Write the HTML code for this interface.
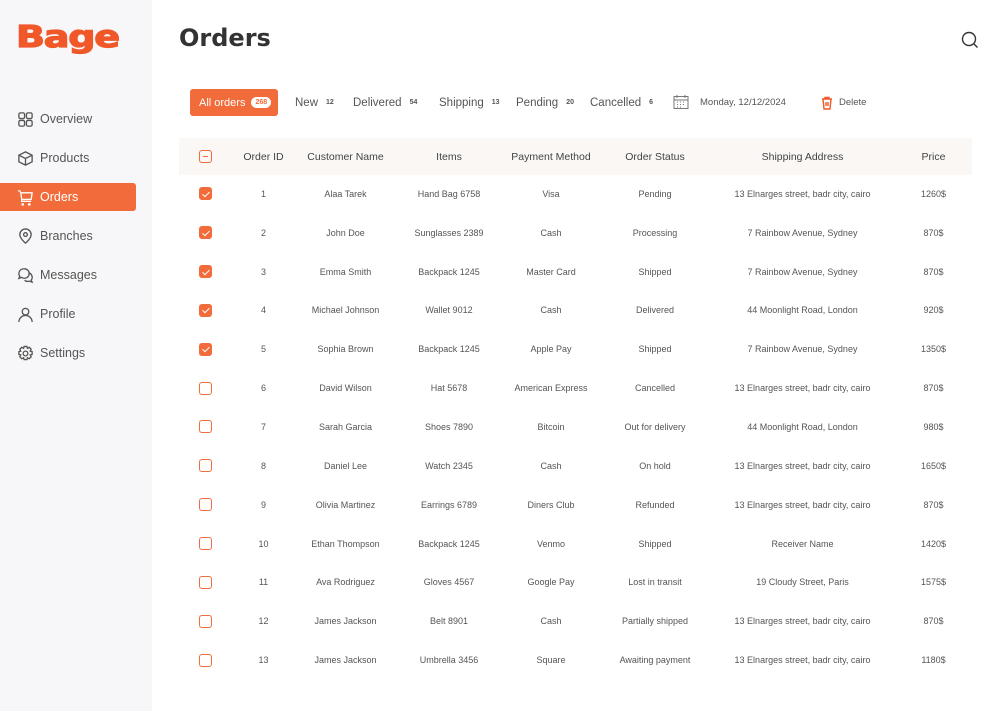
<!DOCTYPE html>
<html><head><meta charset="utf-8"><style>
*{margin:0;padding:0;box-sizing:border-box}
body{width:1000px;height:711px;overflow:hidden;background:#fff;font-family:"Liberation Sans",sans-serif;color:#444;position:relative}
.side{position:absolute;left:0;top:0;width:152px;height:711px;background:#f7f7f9}
.logo{position:absolute;left:16px;top:22px;color:#f0582a;letter-spacing:-1px;transform:scaleX(1.27);transform-origin:left;font-family:"DejaVu Sans",sans-serif;font-weight:900;font-size:30px;line-height:32px;-webkit-text-stroke:1.2px #f0582a}
.nav{position:absolute;left:0;width:136px;height:28px;display:flex;align-items:center;padding-left:17px;font-size:12.5px;color:#555}
.nav svg{width:17px;height:17px;margin-right:6px;fill:none;stroke:#555;stroke-width:1.4}
.nav.act{background:#f26b3a;color:#fff;border-radius:0 3px 3px 0}
.nav.act svg{stroke:#fff}
h1{position:absolute;left:179px;top:24px;font:bold 24px "DejaVu Sans",sans-serif;color:#333}
.t{position:absolute;top:89px;height:27px;display:flex;align-items:center;font-size:11.5px;color:#555;white-space:nowrap}
.t b{font-size:7px;margin-left:8px;color:#555}
.t.act{background:#f26b3a;color:#fff;padding:0 9px;border-radius:3px;left:190px;width:88px;font-size:11px}
.t.act b{background:#fff;color:#f26b3a;border-radius:6px;padding:2px 4px;margin-left:6px}
table{position:absolute;left:179px;top:138px;width:793px;border-collapse:collapse;font-size:9px;color:#555}
th{height:37px;background:#faf7f5;font-weight:normal;font-size:10.5px;color:#444}
td{height:38.85px;text-align:center;padding-bottom:1px}
.cb{display:inline-block;width:13px;height:13px;border:1px solid #f26b3a;border-radius:3px;vertical-align:middle;position:relative}
.cb.on{background:#f26b3a}
.cb.on:after{content:"";position:absolute;left:3.5px;top:1.5px;width:3px;height:6px;border:solid #fff;border-width:0 1.5px 1.5px 0;transform:rotate(45deg)}
.cb.m:after{content:"";position:absolute;left:3px;top:5px;width:5px;height:1.3px;background:#f26b3a}
</style></head><body>
<div class="side">
<div class="logo">Bage</div>
<div class="nav" style="top:105px"><svg viewBox="0 0 18 18"><rect x="2" y="2" width="6" height="6" rx="1.5"/><rect x="10" y="2" width="6" height="6" rx="1.5"/><rect x="2" y="10" width="6" height="6" rx="1.5"/><rect x="10" y="10" width="6" height="6" rx="1.5"/></svg>Overview</div>
<div class="nav" style="top:144px"><svg viewBox="0 0 18 18"><path d="M9 2l7 3.5v7L9 16l-7-3.5v-7z M2 5.5L9 9l7-3.5 M9 9v7"/></svg>Products</div>
<div class="nav act" style="top:183px"><svg viewBox="0 0 18 18"><path d="M1 2h2l1 2h12l-1 7H5L4 4 M5 11v2h10 M6 15.5a.8.8 0 1 0 .1 0 M13 15.5a.8.8 0 1 0 .1 0"/></svg>Orders</div>
<div class="nav" style="top:222px"><svg viewBox="0 0 18 18"><path d="M9 16s-6-5-6-9a6 6 0 0 1 12 0c0 4-6 9-6 9z"/><circle cx="9" cy="7" r="2"/></svg>Branches</div>
<div class="nav" style="top:261px"><svg viewBox="0 0 18 18"><path d="M7 2a5 5 0 0 0-4 8l-1 2 3-1a5 5 0 1 0 2-9z M12 6a5 5 0 0 1 3 8l1 2-3-1a5 5 0 0 1-5-1"/></svg>Messages</div>
<div class="nav" style="top:300px"><svg viewBox="0 0 18 18"><circle cx="9" cy="6" r="3.5"/><path d="M2 17a7 7 0 0 1 14 0"/></svg>Profile</div>
<div class="nav" style="top:339px"><svg viewBox="0 0 18 18"><circle cx="9" cy="9" r="2.5"/><path d="M7.5 1.5h3l.5 2 2-1 2 2-1 2 2 .5v3l-2 .5 1 2-2 2-2-1-.5 2h-3l-.5-2-2 1-2-2 1-2-2-.5v-3l2-.5-1-2 2-2 2 1z"/></svg>Settings</div>
</div>
<h1>Orders</h1>
<svg style="position:absolute;left:961px;top:31px" width="18" height="18" viewBox="0 0 18 18" fill="none" stroke="#333" stroke-width="1.4"><circle cx="8" cy="8" r="6.5"/><path d="M13 13l3.5 3.5"/></svg>
<div class="t act">All orders<b>268</b></div>
<div class="t" style="left:295px">New<b>12</b></div>
<div class="t" style="left:353px">Delivered<b>54</b></div>
<div class="t" style="left:439px">Shipping<b>13</b></div>
<div class="t" style="left:516px">Pending<b>20</b></div>
<div class="t" style="left:590px">Cancelled<b>6</b></div>
<svg style="position:absolute;left:673px;top:94px" width="16" height="16" viewBox="0 0 16 16" fill="none" stroke="#777" stroke-width="1"><rect x="1" y="2.5" width="14" height="12"/><path d="M4 1v3M12 1v3M1 6h14"/><path d="M4 8h1M7 8h1M10 8h1M4 10.5h1M7 10.5h1M10 10.5h1M4 13h1M7 13h1"/></svg>
<div class="t" style="left:700px;font-size:9.5px">Monday, 12/12/2024</div>
<svg style="position:absolute;left:821px;top:96px" width="12" height="14" viewBox="0 0 12 14" fill="none" stroke="#f0582a" stroke-width="1.4"><path d="M1 3h10M4 3V1.5h4V3M2 3l1 10h6l1-10M5 6v4M7 6v4"/></svg>
<div class="t" style="left:839px;font-size:9.5px">Delete</div>
<table>
<tr><th style="width:53px"><span class="cb m"></span></th><th style="width:63px">Order ID</th><th style="width:101px">Customer Name</th><th style="width:106px">Items</th><th style="width:98px">Payment Method</th><th style="width:110px">Order Status</th><th style="width:185px">Shipping Address</th><th>Price</th></tr>
<tr><td><span class="cb on"></span></td><td>1</td><td>Alaa Tarek</td><td>Hand Bag 6758</td><td>Visa</td><td>Pending</td><td>13 Elnarges street, badr city, cairo</td><td>1260$</td></tr>
<tr><td><span class="cb on"></span></td><td>2</td><td>John Doe</td><td>Sunglasses 2389</td><td>Cash</td><td>Processing</td><td>7 Rainbow Avenue, Sydney</td><td>870$</td></tr>
<tr><td><span class="cb on"></span></td><td>3</td><td>Emma Smith</td><td>Backpack 1245</td><td>Master Card</td><td>Shipped</td><td>7 Rainbow Avenue, Sydney</td><td>870$</td></tr>
<tr><td><span class="cb on"></span></td><td>4</td><td>Michael Johnson</td><td>Wallet 9012</td><td>Cash</td><td>Delivered</td><td>44 Moonlight Road, London</td><td>920$</td></tr>
<tr><td><span class="cb on"></span></td><td>5</td><td>Sophia Brown</td><td>Backpack 1245</td><td>Apple Pay</td><td>Shipped</td><td>7 Rainbow Avenue, Sydney</td><td>1350$</td></tr>
<tr><td><span class="cb"></span></td><td>6</td><td>David Wilson</td><td>Hat 5678</td><td>American Express</td><td>Cancelled</td><td>13 Elnarges street, badr city, cairo</td><td>870$</td></tr>
<tr><td><span class="cb"></span></td><td>7</td><td>Sarah Garcia</td><td>Shoes 7890</td><td>Bitcoin</td><td>Out for delivery</td><td>44 Moonlight Road, London</td><td>980$</td></tr>
<tr><td><span class="cb"></span></td><td>8</td><td>Daniel Lee</td><td>Watch 2345</td><td>Cash</td><td>On hold</td><td>13 Elnarges street, badr city, cairo</td><td>1650$</td></tr>
<tr><td><span class="cb"></span></td><td>9</td><td>Olivia Martinez</td><td>Earrings 6789</td><td>Diners Club</td><td>Refunded</td><td>13 Elnarges street, badr city, cairo</td><td>870$</td></tr>
<tr><td><span class="cb"></span></td><td>10</td><td>Ethan Thompson</td><td>Backpack 1245</td><td>Venmo</td><td>Shipped</td><td>Receiver Name</td><td>1420$</td></tr>
<tr><td><span class="cb"></span></td><td>11</td><td>Ava Rodriguez</td><td>Gloves 4567</td><td>Google Pay</td><td>Lost in transit</td><td>19 Cloudy Street, Paris</td><td>1575$</td></tr>
<tr><td><span class="cb"></span></td><td>12</td><td>James Jackson</td><td>Belt 8901</td><td>Cash</td><td>Partially shipped</td><td>13 Elnarges street, badr city, cairo</td><td>870$</td></tr>
<tr><td><span class="cb"></span></td><td>13</td><td>James Jackson</td><td>Umbrella 3456</td><td>Square</td><td>Awaiting payment</td><td>13 Elnarges street, badr city, cairo</td><td>1180$</td></tr>
</table>
</body></html>
